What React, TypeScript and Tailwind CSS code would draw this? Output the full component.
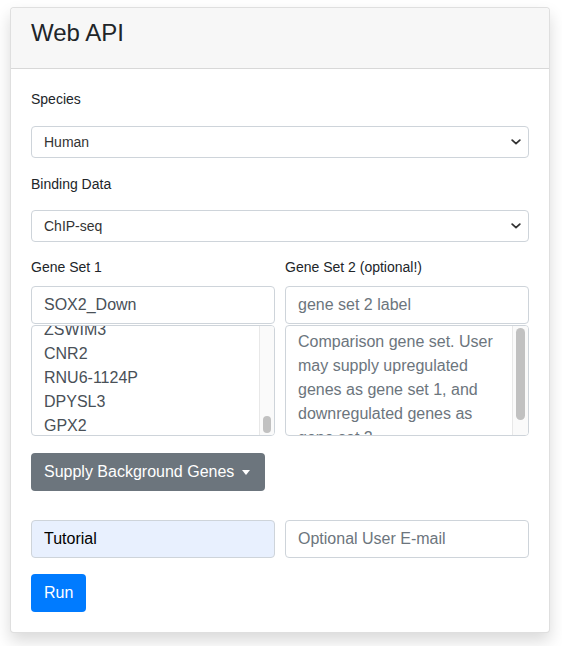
import React from 'react';

const Chevron: React.FC = () => (
  <svg width="10" height="6" viewBox="0 0 10 6" className="shrink-0">
    <path d="M1.2 1.2 L5 4.6 L8.8 1.2" fill="none" stroke="#333" strokeWidth="1.8" strokeLinecap="round" strokeLinejoin="round" />
  </svg>
);

const SelectBox: React.FC<{ value: string }> = ({ value }) => (
  <div className="h-[32px] border border-[#ced4da] rounded-[4px] bg-white pl-[12px] pr-[7px] flex items-center justify-between text-[14px] text-[#333]">
    <span>{value}</span>
    <Chevron />
  </div>
);

const Label: React.FC<{ children: React.ReactNode; className?: string }> = ({ children, className }) => (
  <div className={`text-[14px] leading-[21px] text-[#212529] ${className ?? ''}`}>{children}</div>
);

const inputCls =
  'w-full h-[38px] border border-[#ced4da] rounded-[4px] px-[12px] text-[16px] text-[#495057] placeholder:text-[#6c757d] outline-none';

const genes = ['ZSWIM3', 'CNR2', 'RNU6-1124P', 'DPYSL3', 'GPX2'];
const comparison = [
  'Comparison gene set. User',
  'may supply upregulated',
  'genes as gene set 1, and',
  'downregulated genes as',
  'gene set 2',
];

const App: React.FC = () => {
  return (
    <div className="min-h-[646px] bg-white pt-[7px] font-['Liberation_Sans',Arial,sans-serif]">
      <div className="ml-[10px] w-[540px] bg-white border border-[rgba(0,0,0,0.125)] rounded-[4px] shadow-[0_8px_16px_rgba(0,0,0,0.15)]">
        <div className="h-[61px] px-[20px] pt-[10px] bg-[#f7f7f7] border-b border-[rgba(0,0,0,0.125)] rounded-t-[4px]">
          <h4 className="text-[24px] leading-[29px] text-[#212529]">Web API</h4>
        </div>
        <div className="p-[20px]">
          <Label className="mb-[16px]">Species</Label>
          <SelectBox value="Human" />
          <Label className="mt-[16px] mb-[15px]">Binding Data</Label>
          <SelectBox value="ChIP-seq" />

          <div className="mt-[15px] grid grid-cols-2 gap-[10px]">
            <div>
              <Label className="mb-[8px]">Gene Set 1</Label>
              <input className={inputCls} defaultValue="SOX2_Down" />
              <div className="mt-[1px] h-[111px] border border-[#ced4da] rounded-[4px] flex overflow-hidden">
                <div className="flex-1 overflow-hidden pl-[12px]">
                  <div className="-mt-[8px] text-[16px] leading-[24px] text-[#495057]">
                    {genes.map((g) => (
                      <div key={g}>{g}</div>
                    ))}
                  </div>
                </div>
                <div className="w-[15px] bg-[#fafafa] border-l border-[#e8e8e8] flex flex-col justify-end pb-[2px]">
                  <div className="mx-auto w-[8px] h-[17px] rounded-full bg-[#c1c1c1]" />
                </div>
              </div>
            </div>
            <div>
              <Label className="mb-[8px]">Gene Set 2 (optional!)</Label>
              <input className={inputCls} placeholder="gene set 2 label" />
              <div className="mt-[1px] h-[111px] border border-[#ced4da] rounded-[4px] flex overflow-hidden">
                <div className="flex-1 overflow-hidden pl-[12px] pt-[4px]">
                  <div className="text-[16px] leading-[24px] text-[#6c757d] whitespace-nowrap">
                    {comparison.map((l) => (
                      <div key={l}>{l}</div>
                    ))}
                  </div>
                </div>
                <div className="w-[16px] bg-[#fafafa] border-l border-[#e8e8e8] pt-[2px]">
                  <div className="mx-auto w-[9px] h-[92px] rounded-full bg-[#c1c1c1]" />
                </div>
              </div>
            </div>
          </div>

          <button className="mt-[17px] h-[38px] w-[234px] flex items-center pl-[13px] bg-[#6c757d] rounded-[4px] text-white text-[16px]">
            Supply Background Genes
            <span className="ml-[8px] w-0 h-0 border-t-[5px] border-t-white border-x-[4.5px] border-x-transparent" />
          </button>

          <div className="mt-[29px] grid grid-cols-2 gap-[10px]">
            <input className={`${inputCls} bg-[#e8f0fe] text-black`} defaultValue="Tutorial" />
            <input className={inputCls} placeholder="Optional User E-mail" />
          </div>

          <button className="mt-[16px] h-[38px] w-[55px] bg-[#007bff] rounded-[4px] text-white text-[16px] flex items-center pl-[13px]">
            Run
          </button>
        </div>
      </div>
    </div>
  );
};

export default App;
